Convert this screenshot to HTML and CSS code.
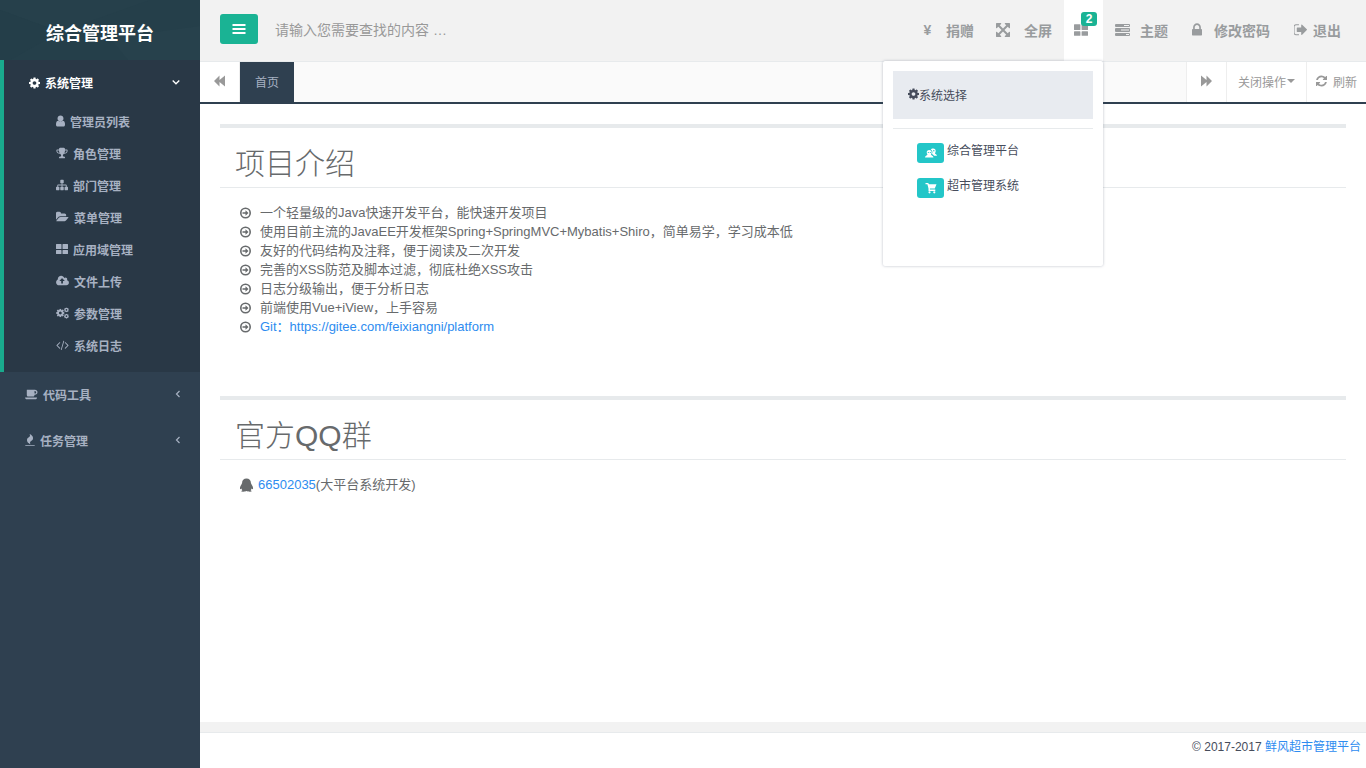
FILE: index.html
```html
<!DOCTYPE html>
<html lang="zh-CN">
<head>
<meta charset="utf-8">
<title>综合管理平台</title>
<link rel="stylesheet" href="styles.css">
</head>
<body>
<svg class="sprite" aria-hidden="true">
  <symbol id="cog" viewBox="128 128 1536 1536"><path d="M1152 896q0-106-75-181t-181-75-181 75-75 181 75 181 181 75 181-75 75-181zm512-109v222q0 12-8 23t-20 13l-185 28q-19 54-39 91 35 50 107 138 10 12 10 25t-9 23q-27 37-99 108t-94 71q-12 0-26-9l-138-108q-44 23-91 38-16 136-29 186-7 28-36 28h-222q-14 0-24.5-8.5t-11.5-21.5l-28-184q-49-16-90-37l-141 107q-10 9-25 9-14 0-25-11-126-114-165-168-7-10-7-23 0-12 8-23 15-21 51-66.5t54-70.5q-27-50-41-99l-183-27q-13-2-21-12.5t-8-23.5v-222q0-12 8-23t19-13l186-28q14-46 39-92-40-57-107-138-10-12-10-24 0-10 9-23 26-36 98.5-107.5t94.5-71.5q13 0 26 10l138 107q44-23 91-38 16-136 29-186 7-28 36-28h222q14 0 24.5 8.5t11.5 21.5l28 184q49 16 90 37l142-107q9-9 24-9 13 0 25 10 129 119 165 170 7 8 7 22 0 12-8 23-15 21-51 66.5t-54 70.5q26 50 41 98l183 28q13 2 21 12.5t8 23.5z"/></symbol>
  <symbol id="user" viewBox="256 60 1280 1640"><path d="M1536 1399q0 109-62.5 187t-150.5 78h-854q-88 0-150.5-78t-62.5-187q0-85 8.5-160.5t31.5-152 58.5-131 94-89 134.5-34.5q131 128 313 128t313-128q76 0 134.5 34.5t94 89 58.5 131 31.5 152 8.5 160.5zm-216-887q0 175-124 299.500t-300 124.500-300-124.500-124-299.500 124-299.500 300-124.500 300 124.500 124 299.500z"/></symbol>
  <symbol id="trophy" viewBox="0 0 1792 1792"><path d="M522 883q-74-162-74-371h-256v96q0 78 94.5 162t235.5 113zm1078-275v-96h-256q0 209-74 371 141-29 235.5-113t94.5-162zm128-128v128q0 71-41.5 143t-112 130-173 97.5-215.5 44.5q-42 54-95 95-38 34-52.5 72.5t-14.5 89.5q0 54 30.5 91t97.5 37q75 0 133.5 45.5t58.5 114.5v64q0 14-9 23t-23 9h-832q-14 0-23-9t-9-23v-64q0-69 58.5-114.5t133.5-45.5q67 0 97.5-37t30.5-91q0-51-14.5-89.5t-52.5-72.5q-53-41-95-95-113-5-215.5-44.5t-173-97.5-112-130-41.5-143v-128q0-40 28-68t68-28h288v-96q0-66 47-113t113-47h576q66 0 113 47t47 113v96h288q40 0 68 28t28 68z"/></symbol>
  <symbol id="sitemap" viewBox="0 0 1792 1792"><path d="M1792 1248v320q0 40-28 68t-68 28h-320q-40 0-68-28t-28-68v-320q0-40 28-68t68-28h96v-192h-512v192h96q40 0 68 28t28 68v320q0 40-28 68t-68 28h-320q-40 0-68-28t-28-68v-320q0-40 28-68t68-28h96v-192h-512v192h96q40 0 68 28t28 68v320q0 40-28 68t-68 28h-320q-40 0-68-28t-28-68v-320q0-40 28-68t68-28h96v-192q0-52 38-90t90-38h512v-192h-96q-40 0-68-28t-28-68v-320q0-40 28-68t68-28h320q40 0 68 28t28 68v320q0 40-28 68t-68 28h-96v192h512q52 0 90 38t38 90v192h96q40 0 68 28t28 68z"/></symbol>
  <symbol id="folder" viewBox="0 0 1856 1792"><path d="M1815 952q0 31-31 66l-336 396q-43 51-120.5 86.5t-143.5 35.5h-1088q-34 0-60.5-13t-26.5-43q0-31 31-66l336-396q43-51 120.5-86.5t143.5-35.5h1088q34 0 60.5 13t26.5 43zm-343-344v160h-832q-94 0-197 47.5t-164 119.5l-337 396-5 6q0-4-.5-12.5t-.5-12.5v-960q0-92 66-158t158-66h320q92 0 158 66t66 158v32h544q92 0 158 66t66 158z"/></symbol>
  <symbol id="tiles" viewBox="0 0 12 12"><path d="M1 1h4q.5 0 .5.5v4q0 .5-.5.5H.5Q0 6 0 5.500v-4Q0 1 .5 1zM7 1h4.500q.5 0 .5.5v4q0 .5-.5.5H7q-.5 0-.5-.5v-4Q6.500 1 7 1zM.5 7H5q.5 0 .5.5v3q0 .5-.5.5H.5q-.5 0-.5-.5v-3Q0 7 .5 7zM7 7h4.500q.5 0 .5.5v3q0 .5-.5.5H7q-.5 0-.5-.5v-3Q6.500 7 7 7z"/></symbol>
  <symbol id="cloud" viewBox="0 0 1920 1792"><path d="M1280 864q0-14-9-23l-352-352q-9-9-23-9t-23 9l-351 351q-10 12-10 24 0 14 9 23t23 9h224v352q0 13 9.5 22.5t22.5 9.5h192q13 0 22.5-9.5t9.5-22.5v-352h224q13 0 22.5-9.5t9.5-22.5zm640 288q0 159-112.5 271.5t-271.5 112.5h-1088q-185 0-316.5-131.5t-131.5-316.5q0-130 70-240t188-165q-2-30-2-43 0-212 150-362t362-150q156 0 285.5 87t188.5 231q71-62 166-62 106 0 181 75t75 181q0 76-41 138 130 31 213.5 135.5t83.5 238.5z"/></symbol>
  <symbol id="cogs" viewBox="0 0 1920 1792"><use href="#cog" x="0" y="260" width="1270" height="1270"/><use href="#cog" x="1180" y="60" width="740" height="740"/><use href="#cog" x="1180" y="1000" width="740" height="740"/></symbol>
  <symbol id="code" viewBox="-64 0 1920 1792"><path d="M553 1399l-50 50q-10 10-23 10t-23-10l-466-466q-10-10-10-23t10-23l466-466q10-10 23-10t23 10l50 50q10 10 10 23t-10 23l-393 393 393 393q10 10 10 23t-10 23zm591-1067l-373 1291q-4 13-15.5 19.5t-23.5 2.5l-62-17q-13-4-19.5-15.5t-2.5-24.5l373-1291q4-13 15.5-19.5t23.5-2.5l62 17q13 4 19.5 15.5t2.5 24.5zm657 651l-466 466q-10 10-23 10t-23-10l-50-50q-10-10-10-23t10-23l393-393-393-393q-10-10-10-23t10-23l50-50q10-10 23-10t23 10l466 466q10 10 10 23t-10 23z"/></symbol>
  <symbol id="coffee" viewBox="0 0 1920 1792"><path d="M1664 640q0-80-56-136t-136-56h-64v384h64q80 0 136-56t56-136zm-1664 768h1792q0 106-75 181t-181 75h-1280q-106 0-181-75t-75-181zm1856-768q0 159-112.5 271.5t-271.5 112.5h-64v32q0 92-66 158t-158 66h-704q-92 0-158-66t-66-158v-736q0-26 19-45t45-19h1152q159 0 271.5 112.5t112.5 271.5z"/></symbol>
  <symbol id="fire" viewBox="192 0 1408 1792"><path d="M1600 1696v64q0 13-9.500 22.500t-22.500 9.500h-1344q-13 0-22.500-9.500t-9.500-22.500v-64q0-13 9.500-22.500t22.500-9.500h1344q13 0 22.500 9.500t9.500 22.500zm-256-1056q0 78-24.500 144t-64 112.500-87.500 88-96 77.500-87.500 72-64 81.500-24.500 96.500q0 96 67 224l-4-1 1 1q-90-41-160-83t-138.500-100-113.500-122.500-72.500-150.500-27.500-184q0-78 24.500-144t64-112.500 87.500-88 96-77.500 87.500-72 64-81.500 24.500-96.500q0-94-66-224l3 1-1-1q90 41 160 83t138.500 100 113.500 122.500 72.500 150.500 27.500 184z"/></symbol>
  <symbol id="bars" viewBox="0 0 14 14"><path d="M.5 2h13v2H.5zM.5 6h13v2H.5zM.5 10h13v2H.5z"/></symbol>
  <symbol id="backward" viewBox="0 0 14 14"><path d="M1 7l5.500-5.500V6L12 1.500v11L6.500 8v4.500z"/></symbol>
  <symbol id="forward" viewBox="0 0 14 14"><path d="M12 7L6.500 1.500V6L1 1.500v11L6.500 8v4.500z"/></symbol>
  <symbol id="expand" viewBox="128 128 1536 1536"><path d="M1411 541l-355 355 355 355 144-144q29-31 70-14 39 17 39 59v448q0 26-19 45t-45 19h-448q-42 0-59-40-17-39 14-69l144-144-355-355-355 355 144 144q31 30 14 69-17 40-59 40h-448q-26 0-45-19t-19-45v-448q0-42 40-59 39-17 69 14l144 144 355-355-355-355-144 144q-19 19-45 19-12 0-24-5-40-17-40-59v-448q0-26 19-45t45-19h448q42 0 59 40 17 39-14 69l-144 144 355 355 355-355-144-144q-31-30-14-69 17-40 59-40h448q26 0 45 19t19 45v448q0 42-39 59-13 5-25 5-26 0-45-19z"/></symbol>
  <symbol id="tasks" viewBox="0 0 15 14"><path fill-rule="evenodd" d="M1 1h13q1 0 1 1v1q0 1-1 1H1Q0 4 0 3V2q0-1 1-1zm8 1v1h5V2zM1 5h13q1 0 1 1v2q0 1-1 1H1Q0 9 0 8V6q0-1 1-1zm5 1.500v1h8v-1zM1 10h13q1 0 1 1v1q0 1-1 1H1q-1 0-1-1v-1q0-1 1-1zm10 1v1h3v-1z"/></symbol>
  <symbol id="lock" viewBox="320 128 1152 1536"><path d="M640 768h512v-192q0-106-75-181t-181-75-181 75-75 181v192zm832 96v576q0 40-28 68t-68 28h-960q-40 0-68-28t-28-68v-576q0-40 28-68t68-28h32v-192q0-184 132-316t316-132 316 132 132 316v192h32q40 0 68 28t28 68z"/></symbol>
  <symbol id="signout" viewBox="128 128 1504 1600"><path d="M704 1440q0 4 1 20t.5 26.500-3 23.500-10 19.500-20.500 6.500h-320q-119 0-203.500-84.500t-84.500-203.500v-704q0-119 84.500-203.500t203.500-84.500h320q13 0 22.500 9.500t9.500 22.500q0 4 1 20t.5 26.500-3 23.500-10 19.500-20.500 6.500h-320q-66 0-113 47t-47 113v704q0 66 47 113t113 47h312l11.500 1 11.500 3 8 5.500 7 9 2 13.500zm928-544q0 26-19 45l-544 544q-19 19-45 19t-45-19-19-45v-288h-448q-26 0-45-19t-19-45v-384q0-26 19-45t45-19h448v-288q0-26 19-45t45-19 45 19l544 544q19 19 19 45z"/></symbol>
  <symbol id="refresh" viewBox="128 128 1536 1536"><path d="M1639 1056q0 5-1 7-64 268-268 434.500t-478 166.500q-146 0-282.500-55t-243.500-157l-129 129q-19 19-45 19t-45-19-19-45v-448q0-26 19-45t45-19h448q26 0 45 19t19 45-19 45l-137 137q71 66 161 102t187 36q134 0 250-65t186-179q11-17 53-117 8-23 30-23h192q13 0 22.500 9.500t9.500 22.500zm25-800v448q0 26-19 45t-45 19h-448q-26 0-45-19t-19-45 19-45l138-138q-148-137-349-137-134 0-250 65t-186 179q-11 17-53 117-8 23-30 23h-199q-13 0-22.500-9.500t-9.500-22.500v-7q65-268 270-434.500t480-166.500q146 0 284 55.500t245 156.500l130-129q19-19 45-19t45 19 19 45z"/></symbol>
  <symbol id="circle-arrow" viewBox="0 0 12 12"><circle cx="5.500" cy="6" r="4.700" fill="none" stroke="currentColor" stroke-width="1.600"/><path d="M2.500 5.200h3V3.200l3 2.800-3 2.800v-2h-3z"/></symbol>
  <symbol id="qq" viewBox="0 0 14 14"><path d="M6.500.5c2.700 0 4.400 1.900 4.400 4.300 0 .7.300 1 .7 1.600.9 1.400 1.700 3 1.400 4.400-.2.800-.8.500-1.400-.3-.2.700-.5 1.200-1 1.700.7.300 1.100.6 1 1-.3.700-3.700.6-5.100-.1-1.400.7-4.800.8-5.100.1-.1-.4.300-.7 1-1-.5-.5-.8-1-1-1.700-.6.800-1.200 1.100-1.400.3-.3-1.400.5-3 1.400-4.400.4-.6.700-.9.700-1.600C2.100 2.400 3.800.5 6.500.5z"/></symbol>
  <symbol id="people" viewBox="0 0 12 12"><path fill-rule="evenodd" d="M8.200 1.500c1.600 0 2.500.9 2.500 2.400 0 1-.3 1.800-.8 2.400.2.800 1.800.9 2.100 2.400H9C8.300 7.700 7.500 7.400 7 7.100 8 5 7.200 3.200 5.700 2.600c.5-.7 1.300-1.100 2.500-1.100zM8 3.300v1h1.500v-1z"/><path fill-rule="evenodd" d="M4.200 3c1.700 0 2.500 1 2.500 2.300 0 1-.4 1.600-.8 2.100.2 1 2.300 1 2.600 3.100H0c.2-2.100 2.200-2.100 2.500-3.100-.5-.5-.8-1.100-.8-2.100C1.700 4 2.500 3 4.200 3zM2.800 5v1h1V5zm2 0v1h1V5z"/></symbol>
  <symbol id="cart" viewBox="0 0 12 12"><path d="M.5 1h2.600l1 1.200H11.500L9.800 6.600H4.900v1h5.400V9H3.500V6.500L2.400 2.200H.5z"/><circle cx="4.500" cy="10.300" r="1.100"/><circle cx="9.300" cy="10.300" r="1.100"/></symbol>
  <symbol id="chevron-down" viewBox="0 0 8 8"><path d="M.7 1.500L4 4.800l3.300-3.300" fill="none" stroke="currentColor" stroke-width="1.300"/></symbol>
  <symbol id="chevron-left" viewBox="0 0 8 8"><path d="M5.500 1L2.500 4l3 3" fill="none" stroke="currentColor" stroke-width="1.200"/></symbol>
</svg>

<div class="app">
  <aside class="sidebar">
    <div class="brand">
      <svg class="brand-pattern" viewBox="0 0 200 60" preserveAspectRatio="none" aria-hidden="true"><path d="M0 0h150L60 32 0 10z" fill="#26404b"/><path d="M110 38l90-12v34h-72z" fill="#27414c"/><path d="M0 10l60 22-50 28H0z" fill="#243e49"/></svg>
      <span class="brand-name">综合管理平台</span>
    </div>
    <nav>
      <div class="group group-open">
        <a class="group-head" href="#"><svg class="i12 w11"><use href="#cog"/></svg><span>系统管理</span><svg class="chevron"><use href="#chevron-down"/></svg></a>
        <ul class="submenu">
          <li><a href="#"><svg class="i12 w9"><use href="#user"/></svg>管理员列表</a></li>
          <li><a href="#"><svg class="i12 w12"><use href="#trophy"/></svg>角色管理</a></li>
          <li><a href="#"><svg class="i12 w12"><use href="#sitemap"/></svg>部门管理</a></li>
          <li><a href="#"><svg class="i12 w13"><use href="#folder"/></svg>菜单管理</a></li>
          <li><a href="#"><svg class="i12 w12"><use href="#tiles"/></svg>应用域管理</a></li>
          <li><a href="#"><svg class="i12 w13"><use href="#cloud"/></svg>文件上传</a></li>
          <li><a href="#"><svg class="i12 w13"><use href="#cogs"/></svg>参数管理</a></li>
          <li><a href="#"><svg class="i12 w13"><use href="#code"/></svg>系统日志</a></li>
        </ul>
      </div>
      <div class="group"><a class="group-head" href="#"><svg class="i12 w13"><use href="#coffee"/></svg><span>代码工具</span><svg class="chevron"><use href="#chevron-left"/></svg></a></div>
      <div class="group"><a class="group-head" href="#"><svg class="i12 w10"><use href="#fire"/></svg><span>任务管理</span><svg class="chevron"><use href="#chevron-left"/></svg></a></div>
    </nav>
  </aside>

  <div class="page">
    <header class="topbar">
      <button class="toggle" type="button" aria-label="菜单"><svg class="i14 w14"><use href="#bars"/></svg></button>
      <input class="search" type="text" placeholder="请输入您需要查找的内容 …" aria-label="搜索">
      <ul class="actions">
        <li class="near"><a href="#"><span class="yen">¥</span>捐赠</a></li>
        <li class="near"><a href="#"><svg class="i14 w14"><use href="#expand"/></svg>全屏</a></li>
        <li class="apps">
          <button class="apps-button" type="button" aria-label="系统选择"><svg class="i14 w14"><use href="#tiles"/></svg><span class="count">2</span></button>
          <div class="dropdown">
            <div class="dropdown-title"><svg class="i12 w11"><use href="#cog"/></svg>系统选择</div>
            <ul class="systems">
              <li><a href="#"><span class="tag"><svg class="i12 w12"><use href="#people"/></svg></span>综合管理平台</a></li>
              <li><a href="#"><span class="tag"><svg class="i12 w12"><use href="#cart"/></svg></span>超市管理系统</a></li>
            </ul>
          </div>
        </li>
        <li class="theme"><a href="#"><svg class="i14 w15"><use href="#tasks"/></svg>主题</a></li>
        <li><a href="#"><svg class="i14 w10"><use href="#lock"/></svg>修改密码</a></li>
        <li class="exit"><a href="#"><svg class="i14 w13"><use href="#signout"/></svg>退出</a></li>
      </ul>
    </header>

    <div class="tabs">
      <button class="tab-button tab-prev" type="button" aria-label="向左"><svg class="i14 w14"><use href="#backward"/></svg></button>
      <a class="tab" href="#">首页</a>
      <button class="tab-button tab-next" type="button" aria-label="向右"><svg class="i14 w14"><use href="#forward"/></svg></button>
      <button class="tab-button tab-close" type="button">关闭操作<span class="caret"></span></button>
      <button class="tab-button tab-refresh" type="button"><svg class="i12 w11"><use href="#refresh"/></svg>刷新</button>
    </div>

    <main class="content">
      <section class="box intro">
        <h1>项目介绍</h1>
        <ul class="lines">
          <li><svg class="i12 w12"><use href="#circle-arrow"/></svg>一个轻量级的Java快速开发平台，能快速开发项目</li>
          <li><svg class="i12 w12"><use href="#circle-arrow"/></svg>使用目前主流的JavaEE开发框架Spring+SpringMVC+Mybatis+Shiro，简单易学，学习成本低</li>
          <li><svg class="i12 w12"><use href="#circle-arrow"/></svg>友好的代码结构及注释，便于阅读及二次开发</li>
          <li><svg class="i12 w12"><use href="#circle-arrow"/></svg>完善的XSS防范及脚本过滤，彻底杜绝XSS攻击</li>
          <li><svg class="i12 w12"><use href="#circle-arrow"/></svg>日志分级输出，便于分析日志</li>
          <li><svg class="i12 w12"><use href="#circle-arrow"/></svg>前端使用Vue+iView，上手容易</li>
          <li><svg class="i12 w12"><use href="#circle-arrow"/></svg><a href="#">Git：https://gitee.com/feixiangni/platform</a></li>
        </ul>
      </section>
      <section class="box">
        <h1>官方QQ群</h1>
        <p class="qq"><svg class="i14 w14"><use href="#qq"/></svg><span><a href="#">66502035</a>(大平台系统开发)</span></p>
      </section>
    </main>

    <footer class="footer">© 2017-2017 <a href="#">鲜风超市管理平台</a></footer>
  </div>
</div>
</body>
</html>
```

FILE: styles.css
```css
* { box-sizing: border-box; }

body {
  margin: 0;
  color: #676a6c;
  background: #f2f2f2;
  font-family: "Liberation Sans", "Noto Sans CJK SC", sans-serif;
  font-size: 13px;
}

ul, h1, p { margin: 0; padding: 0; }
ul { list-style: none; }
a { color: inherit; text-decoration: none; }
button { border: 0; padding: 0; background: none; color: inherit; font: inherit; cursor: pointer; }
svg { fill: currentColor; flex: none; }

.sprite { position: absolute; width: 0; height: 0; }
.i12 { height: 12px; }
.i14 { height: 14px; }
.w9 { width: 9px; }
.w10 { width: 10px; }
.w11 { width: 11px; }
.w12 { width: 12px; }
.w13 { width: 13px; }
.w14 { width: 14px; }
.w15 { width: 15px; }

.app { display: flex; min-height: 100vh; }

/* Sidebar */
.sidebar { flex: none; width: 200px; background: #2f4050; color: #a7b1c2; font-size: 12px; font-weight: 600; }
.brand { display: grid; height: 60px; background: #253f4a; color: #fff; font-size: 18px; font-weight: 700; }
.brand-pattern, .brand-name { grid-area: 1 / 1; }
.brand-pattern { width: 100%; height: 60px; }
.brand-name { z-index: 1; place-self: center; padding-top: 4px; }
.group-head { display: flex; align-items: center; gap: 5px; height: 46px; padding: 0 18px 0 25px; }
.chevron { width: 8px; height: 8px; margin-left: auto; }
.group-open { padding-bottom: 11px; border-left: 4px solid #19aa8d; background: #293846; }
.group-open .group-head { height: 45px; padding-right: 20px; color: #fff; }
.submenu a { display: flex; align-items: center; gap: 5px; height: 32px; padding-left: 52px; }
.group:not(.group-open) .group-head { padding-bottom: 2px; }

/* Top bar */
.page { display: flex; flex: 1; flex-direction: column; min-width: 0; }
.topbar { display: flex; height: 62px; padding-left: 20px; border-bottom: 1px solid #e7eaec; background: #f2f2f2; }
.toggle { display: grid; place-items: center; width: 38px; height: 30px; margin-top: 14px; border-radius: 3px; background: #1ab394; color: #fff; }
.search { flex: 1; min-width: 0; height: 60px; padding: 0 17px; border: 0; outline: 0; background: transparent; font-family: inherit; font-size: 14px; }
.search::placeholder { color: #999; opacity: 1; }
.actions { display: flex; padding-right: 13px; color: #999c9e; font-size: 14px; font-weight: 600; }
.actions > li > a { display: flex; align-items: center; gap: 12px; height: 59px; padding: 0 12px; }
.actions > .near > a { gap: 14px; padding-left: 10px; }
.actions > .theme > a { gap: 10px; }
.actions > .exit > a { gap: 6px; }
.yen { width: 9px; text-align: center; }
.apps { position: relative; }
.apps-button { display: block; width: 39px; height: 61px; padding: 0 0 2px 10px; background: #fff; }
.apps-button svg { display: block; }
.count { position: absolute; top: 12px; left: 17px; width: 16px; border-radius: 3px; background: #1ab394; color: #fff; font-size: 12px; line-height: 14px; text-align: center; }

.dropdown { position: absolute; z-index: 5; top: 61px; right: 0; width: 220px; min-height: 205px; padding: 10px; border-radius: 2px; background: #fff; box-shadow: 0 0 3px rgba(86, 96, 117, .4); color: #464c5b; font-size: 12px; font-weight: 400; }
.dropdown-title { display: flex; align-items: center; height: 48px; padding: 0 15px 2px; background: #e8ebf0; }
.systems { margin-top: 9px; padding: 14px 24px; border-top: 1px solid #e7eaec; }
.systems a { display: flex; gap: 3px; height: 20px; margin-bottom: 15px; line-height: 17px; }
.tag { display: grid; place-items: center; width: 27px; height: 20px; border-radius: 3px; background: #23c6c8; color: #fff; }

/* Tab strip */
.tabs { display: flex; height: 42px; border-bottom: 2px solid #2f4050; background: #fafafa; color: #999; font-size: 12px; }
.tab-button { display: flex; align-items: center; justify-content: center; padding-bottom: 2px; border-left: 1px solid #eee; background: #fff; }
.tab-prev { width: 40px; border-right: 1px solid #eee; border-left: 0; }
.tab { display: flex; align-items: center; padding: 0 15px 2px; background: #2f4050; color: #a7b1c2; }
.tab-next { width: 40px; margin-left: auto; }
.tab-close { gap: 1px; width: 80px; }
.tab-refresh { gap: 6px; width: 60px; }
.caret { border: 4px solid transparent; border-top-color: currentColor; border-bottom: 0; }

/* Content */
.content { flex: 1; padding: 20px; background: #fff; }
.box { border-top: 4px solid #e7eaec; }
.intro { margin-bottom: 60px; }
h1 { height: 60px; padding: 14px 15px 0; border-bottom: 1px solid #e7eaec; font-size: 30px; font-weight: 300; line-height: 44px; }
.lines { padding: 15px 20px 0; }
.lines li { display: flex; align-items: center; gap: 8px; line-height: 19px; }
.lines a, .qq a, .footer a { color: #2d8cf0; }
.qq { display: flex; align-items: center; gap: 4px; padding: 15px 20px; line-height: 19px; }

.footer { height: 36px; margin-top: 10px; padding: 0 5px; border-top: 1px solid #e7eaec; background: #fff; color: #464c5b; font-size: 12px; line-height: 28px; text-align: right; }
```
